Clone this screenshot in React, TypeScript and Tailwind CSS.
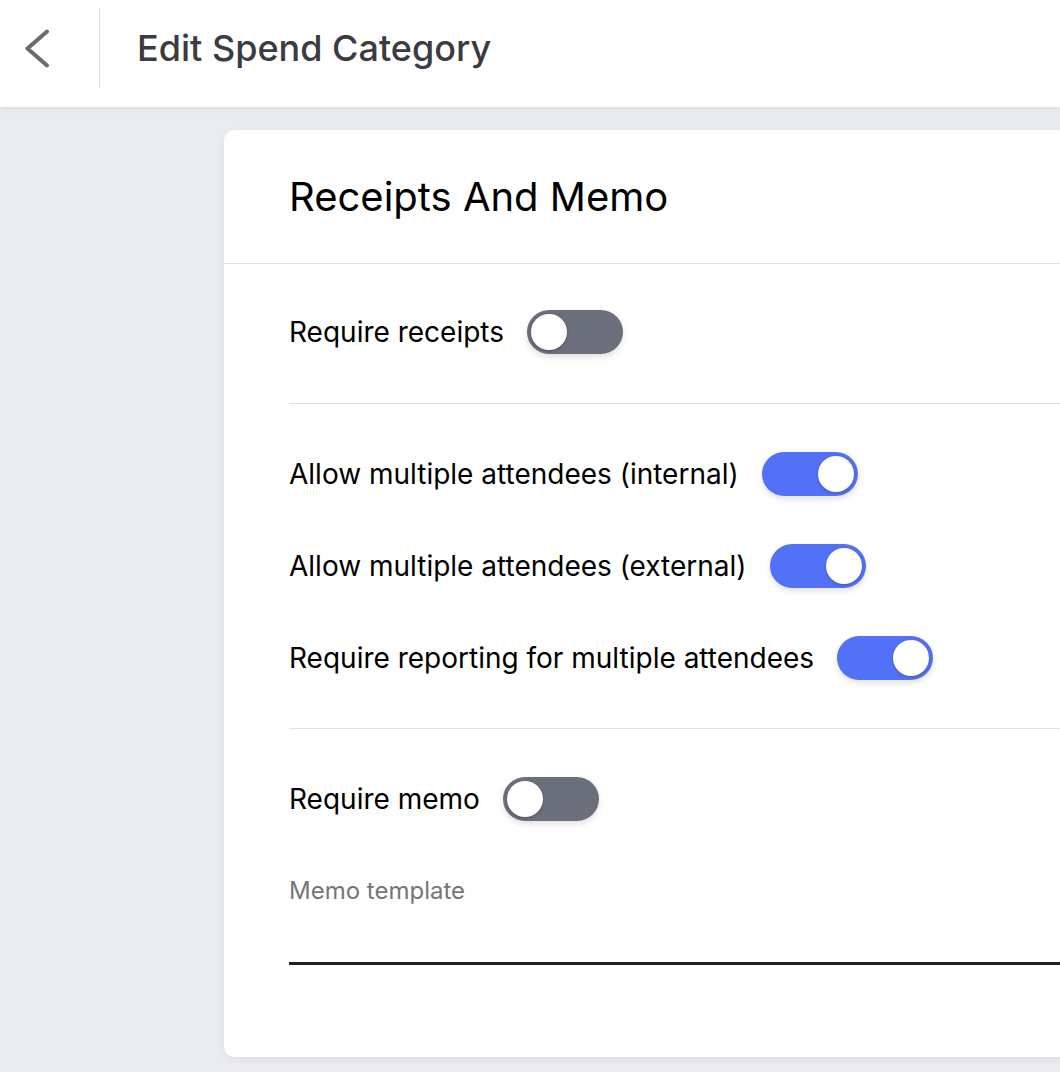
import React, { useState } from 'react';

function Toggle({ on, onChange }: { on: boolean; onChange: () => void }) {
  return (
    <button
      type="button"
      onClick={onChange}
      className={`relative w-[96px] h-[44px] shrink-0 rounded-full shadow-[0_3px_6px_rgba(0,0,0,0.12)] transition-colors ${
        on ? 'bg-[#5271f6]' : 'bg-[#6b6f7c]'
      }`}
    >
      <span
        className={`absolute top-[4px] w-[36px] h-[36px] rounded-full bg-white shadow-[0_1px_3px_rgba(0,0,0,0.25)] transition-all ${
          on ? 'left-[56px]' : 'left-[4px]'
        }`}
      />
    </button>
  );
}

function Row({ label, on, onChange }: { label: string; on: boolean; onChange: () => void }) {
  return (
    <div className="flex items-center gap-[23px]">
      <span className="text-[28px] leading-none text-black">{label}</span>
      <Toggle on={on} onChange={onChange} />
    </div>
  );
}

export default function App() {
  const [flags, setFlags] = useState({
    receipts: false,
    internal: true,
    external: true,
    reporting: true,
    memo: false,
  });
  const flip = (k: keyof typeof flags) => setFlags((f) => ({ ...f, [k]: !f[k] }));

  return (
    <div
      className="w-full h-[1072px] overflow-hidden bg-[#ebecef]"
      style={{ fontFamily: 'Inter, "Noto Sans", sans-serif' }}
    >
      <header className="relative z-10 h-[107px] bg-white shadow-[0_2px_6px_rgba(0,0,0,0.08)]">
        <div className="h-[96px] flex items-center">
          <button type="button" className="w-[99px] h-full flex items-center pl-[22px]">
            <svg width="30" height="40" viewBox="0 0 30 40" fill="none">
              <path d="M25 3.5 L5.5 20.5 L25 37.5" stroke="#6b6b6b" strokeWidth="4" strokeLinecap="round" strokeLinejoin="round" />
            </svg>
          </button>
          <div className="w-px h-[80px] bg-[#dedede]" />
          <h1 className="ml-[37px] text-[36px] leading-none font-medium text-[#3b3b41]">Edit Spend Category</h1>
        </div>
      </header>

      <div className="pl-[224px] pt-[23px]">
        <div className="w-[1000px] h-[927px] bg-white rounded-[10px] shadow-[0_2px_8px_rgba(0,0,0,0.06)]">
          <div className="h-[134px] flex items-center pl-[65px] border-b border-[#e2e2e2]">
            <h2 className="text-[40px] leading-none text-black">Receipts And Memo</h2>
          </div>

          <div className="ml-[65px]">
            <div className="pt-[46px] pb-[49px] border-b border-[#e2e2e2]">
              <Row label="Require receipts" on={flags.receipts} onChange={() => flip('receipts')} />
            </div>

            <div className="pt-[48px] pb-[48px] flex flex-col gap-[48px] border-b border-[#e2e2e2]">
              <Row label="Allow multiple attendees (internal)" on={flags.internal} onChange={() => flip('internal')} />
              <Row label="Allow multiple attendees (external)" on={flags.external} onChange={() => flip('external')} />
              <Row label="Require reporting for multiple attendees" on={flags.reporting} onChange={() => flip('reporting')} />
            </div>

            <div className="pt-[48px]">
              <Row label="Require memo" on={flags.memo} onChange={() => flip('memo')} />
              <div className="mt-[58px]">
                <label className="block text-[24px] leading-none text-[#767676]">Memo template</label>
                <input
                  type="text"
                  className="block w-full mt-[22px] pb-[4px] bg-transparent text-[22px] outline-none border-b-[3px] border-[#222222]"
                />
              </div>
            </div>
          </div>
        </div>
      </div>
    </div>
  );
}
